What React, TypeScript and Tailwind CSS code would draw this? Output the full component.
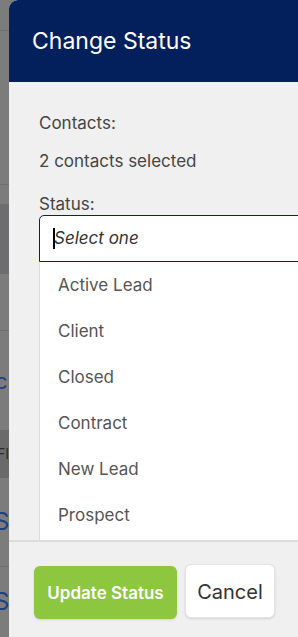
import React from 'react';

const statuses = ['Active Lead', 'Client', 'Closed', 'Contract', 'New Lead', 'Prospect'];

export default function App() {
  return (
    <div
      className="flex h-[637px] w-[298px] overflow-hidden bg-[#7c7c7c]"
      style={{ fontFamily: 'Inter, "Noto Sans", sans-serif' }}
    >
      {/* page behind the overlay */}
      <div className="flex w-[9px] shrink-0 flex-col overflow-hidden text-[#1d3f86]">
        <div className="h-[31px] border-b border-[#6f6f6f]" />
        <div className="h-[155px] border-b border-[#6f6f6f]" />
        <div className="h-[19px]" />
        <div className="h-[70px] bg-[#6d6d70]" />
        <div className="h-[58px] border-b border-[#6f6f6f]" />
        <div className="flex h-[99px] items-center text-[22px] leading-none">
          <span className="-ml-[5px]">c</span>
        </div>
        <div className="flex h-[48px] items-center bg-[#6a6a6a] text-[14px] text-[#2a2a2a]">
          <span className="-ml-[3px]">FI</span>
        </div>
        <div className="flex h-[90px] items-center border-b border-[#6f6f6f] text-[24px] leading-none">
          <span className="-ml-[6px]">S</span>
        </div>
        <div className="flex h-[70px] items-center text-[24px] leading-none">
          <span className="-ml-[6px]">S</span>
        </div>
      </div>

      {/* modal */}
      <div className="flex min-w-[320px] flex-col overflow-hidden rounded-tl-[9px] bg-[#f0f0f0]">
        <div className="flex h-[82px] shrink-0 items-center bg-[#03205c] pl-[23px]">
          <h2 className="text-[23px] font-normal text-white">Change Status</h2>
        </div>

        <div className="flex flex-col pl-[30px] pt-[29px] text-[17px] text-[#454545]">
          <div className="leading-[24px]">Contacts:</div>
          <div className="mt-[14px] leading-[24px]">2 contacts selected</div>
          <div className="mt-[21px] leading-[20px]">Status:</div>

          <div className="mt-[1px] flex h-[47px] items-center rounded-tl-[5px] border border-[#0a2160] bg-white pl-[13px]">
            <span className="mr-[-1px] h-[21px] w-[2px] bg-black" />
            <span className="pt-[1px] text-[17px] italic text-[#333]">Select one</span>
          </div>
          <ul className="h-[278px] border-l border-[#dcdcdc] bg-white">
            {statuses.map((s) => (
              <li key={s} className="flex h-[46px] items-center pl-[18px] pt-[2px] text-[17px] text-[#555]">
                {s}
              </li>
            ))}
          </ul>
        </div>

        <div className="flex flex-1 items-start gap-[8px] border-t-2 border-[#dcdcdc] pl-[25px] pt-[24px]">
          <button className="h-[53px] w-[143px] rounded-[6px] bg-[#8dc63f] pt-[3px] text-[17px] font-semibold text-white shadow-sm">
            Update Status
          </button>
          <button className="-mt-[2px] h-[54px] w-[90px] rounded-[6px] border border-[#e3e3e3] bg-white pt-[2px] text-[20px] text-[#333] shadow-sm">
            Cancel
          </button>
        </div>
      </div>
    </div>
  );
}
